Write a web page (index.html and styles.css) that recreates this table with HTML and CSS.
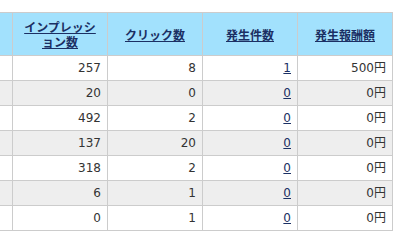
FILE: index.html
```html
<!DOCTYPE html>
<html lang="ja">
<head>
<meta charset="utf-8">
<link rel="stylesheet" href="styles.css">
</head>
<body>
<div class="wrap">
<table class="report">
  <colgroup>
    <col class="c"><col class="c"><col class="c"><col class="c"><col class="c">
  </colgroup>
  <thead>
    <tr>
      <th></th>
      <th><a href="#">インプレッション数</a></th>
      <th><a href="#">クリック数</a></th>
      <th><a href="#">発生件数</a></th>
      <th><a href="#">発生報酬額</a></th>
    </tr>
  </thead>
  <tbody>
    <tr><td></td><td>257</td><td>8</td><td><a href="#">1</a></td><td>500円</td></tr>
    <tr class="alt"><td></td><td>20</td><td>0</td><td><a href="#">0</a></td><td>0円</td></tr>
    <tr><td></td><td>492</td><td>2</td><td><a href="#">0</a></td><td>0円</td></tr>
    <tr class="alt"><td></td><td>137</td><td>20</td><td><a href="#">0</a></td><td>0円</td></tr>
    <tr><td></td><td>318</td><td>2</td><td><a href="#">0</a></td><td>0円</td></tr>
    <tr class="alt"><td></td><td>6</td><td>1</td><td><a href="#">0</a></td><td>0円</td></tr>
    <tr><td></td><td>0</td><td>1</td><td><a href="#">0</a></td><td>0円</td></tr>
  </tbody>
</table>
</div>
</body>
</html>
```

FILE: styles.css
```css
html, body {
  margin: 0;
  padding: 0;
  background: #fff;
}
body {
  font-family: "DejaVu Sans", Verdana, "Noto Sans CJK JP", sans-serif;
  font-size: 12px;
  color: #333;
  overflow: hidden;
}
.wrap {
  padding-top: 12px;
  margin-left: -83px;
}
.report {
  border-collapse: collapse;
  table-layout: fixed;
  width: 476px;
}
.report .c {
  width: 95px;
}
.report th {
  background: #a2e1fd;
  border: 1px solid #ccc;
  height: 42px;
  padding: 0 6px;
  text-align: center;
  vertical-align: middle;
  font-weight: bold;
  line-height: 15px;
  font-family: "Noto Sans CJK JP", sans-serif;
}
.report th a {
  color: #1b2f63;
  text-decoration: underline;
}
.report td {
  border: 1px solid #ccc;
  height: 24px;
  padding: 0 6px;
  text-align: right;
  vertical-align: middle;
  line-height: 14px;
}
.report tr.alt td {
  background: #eee;
}
.report td a {
  color: #1b2f63;
  text-decoration: underline;
}
```
